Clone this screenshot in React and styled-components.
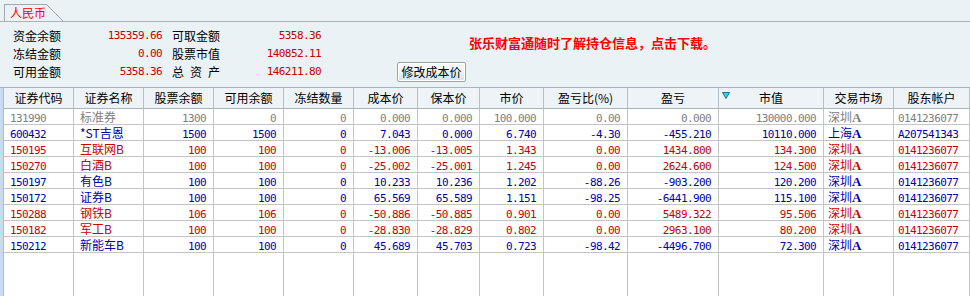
import React from 'react';
import styled, { createGlobalStyle } from 'styled-components';

const Global = createGlobalStyle`
  html, body { margin: 0; padding: 0; }
  body {
    background: #eaf2f6;
    font-family: "Noto Sans CJK SC", "Noto Sans", sans-serif;
    font-size: 12px;
    color: #000;
    overflow: hidden;
  }
  * { box-sizing: border-box; }
`;

const Page = styled.div`
  width: 970px;
  height: 296px;
  display: flex;
  flex-direction: column;
  background: #eaf2f6;
`;

const TabStrip = styled.div`
  height: 22px;
  padding: 4px 0 0 4px;
  border-bottom: 1px solid #a9b3bb;
  display: flex;
`;

const Tab = styled.div`
  display: flex;
  height: 17px;
`;

const TabLabel = styled.div`
  border-left: 1px solid #a0a9b1;
  border-top: 1px solid #a0a9b1;
  padding: 0 0 0 5px;
  width: 42px;
  color: #ff0000;
  font-size: 12px;
  line-height: 16px;
  white-space: nowrap;
`;

const TabSlant = styled.div`
  width: 17px;
  height: 17px;
  background: linear-gradient(
    to top right,
    transparent calc(50% - 0.7px),
    #a0a9b1 calc(50% - 0.7px),
    #a0a9b1 calc(50% + 0.7px),
    transparent calc(50% + 0.7px)
  );
`;

const Info = styled.div`
  height: 65px;
  padding-left: 13px;
  display: flex;
`;

const Funds = styled.div`
  margin-top: 5px;
  display: grid;
  grid-template-columns: 149px 149px;
  grid-auto-rows: 18px;
  column-gap: 10px;
`;

const FundItem = styled.div`
  display: flex;
  justify-content: space-between;
  align-items: center;
  line-height: 18px;
`;

const FundLabel = styled.span`
  color: #000;
  white-space: pre;
`;

const NumText = styled.span`
  font-family: "DejaVu Sans Mono", "Liberation Mono", monospace;
  font-size: 11px;
  letter-spacing: -0.6px;
  color: ${p => p.$color || '#000'};
`;

const Side = styled.div`
  margin-left: 76px;
  display: flex;
  flex-direction: column;
  align-items: flex-start;
`;

const Promo = styled.div`
  margin: 13px 0 0 72px;
  color: #ff0000;
  font-weight: bold;
  font-size: 13px;
  line-height: 16px;
  white-space: nowrap;
`;

const Button = styled.button`
  margin-top: 11px;
  height: 20px;
  width: 69px;
  padding: 0;
  font-family: "Noto Sans CJK SC", sans-serif;
  font-size: 12px;
  line-height: 16px;
  color: #000;
  border: 1px solid #a2a2a2;
  border-radius: 2px;
  background: linear-gradient(#fbfdfe 0%, #eef5f9 45%, #cfe3f1 100%);
  box-shadow: inset 0 0 0 1px #ffffff;
`;

const TableArea = styled.div`
  flex: 1;
  display: flex;
  border-top: 1px solid #aab3ba;
`;

const Strip = styled.div`
  width: 4px;
  background: #c9dbf2;
  border-right: 1px solid #a9bcd6;
`;

const Grid = styled.div`
  flex: 1;
  display: grid;
  grid-template-columns: 70px 70px 70px 70px 70px 64px 62px 64px 84px 91px 105px 70px 1fr;
  grid-template-rows: 21px repeat(9, 16px) 1fr;
  background: #fff;
`;

const HeadCell = styled.div`
  position: relative;
  background: #edf3f7;
  border-right: 1px solid #b6bec6;
  border-bottom: 1px solid #a9b3bb;
  text-align: center;
  line-height: 20px;
  white-space: nowrap;
  color: #000;
`;

const SortMark = styled.svg`
  position: absolute;
  left: 3px;
  top: 4px;
`;

const Cell = styled.div`
  border-right: 1px solid #c4c4c4;
  border-bottom: 1px solid #c4c4c4;
  text-align: ${p => p.$align || 'left'};
  padding: ${p => (p.$align === 'right' ? '0 7px 0 0' : `0 0 0 ${p.$pad ?? 6}px`)};
  line-height: 15px;
  white-space: nowrap;
  overflow: hidden;
  color: ${p => p.$color};
`;

const FillCell = styled.div`
  border-right: 1px solid #c4c4c4;
`;

const MarketA = styled.span`
  font-family: "Liberation Serif", "DejaVu Serif", serif;
  font-weight: bold;
  font-size: 13px;
`;

const RED = '#c80000';
const BLUE = '#0000b0';
const GRAY = '#808080';

const headers = ['证券代码', '证券名称', '股票余额', '可用余额', '冻结数量', '成本价', '保本价', '市价', '盈亏比(%)', '盈亏', '市值', '交易市场', '股东帐户'];

const rows = [
  [GRAY, '131990', '标准券', '1300', '0', '0', '0.000', '0.000', '100.000', '0.00', '0.000', '130000.000', '深圳', '0141236077'],
  [BLUE, '600432', '*ST吉恩', '1500', '1500', '0', '7.043', '0.000', '6.740', '-4.30', '-455.210', '10110.000', '上海', 'A207541343'],
  [RED, '150195', '互联网B', '100', '100', '0', '-13.006', '-13.005', '1.343', '0.00', '1434.800', '134.300', '深圳', '0141236077'],
  [RED, '150270', '白酒B', '100', '100', '0', '-25.002', '-25.001', '1.245', '0.00', '2624.600', '124.500', '深圳', '0141236077'],
  [BLUE, '150197', '有色B', '100', '100', '0', '10.233', '10.236', '1.202', '-88.26', '-903.200', '120.200', '深圳', '0141236077'],
  [BLUE, '150172', '证券B', '100', '100', '0', '65.569', '65.589', '1.151', '-98.25', '-6441.900', '115.100', '深圳', '0141236077'],
  [RED, '150288', '钢铁B', '106', '106', '0', '-50.886', '-50.885', '0.901', '0.00', '5489.322', '95.506', '深圳', '0141236077'],
  [RED, '150182', '军工B', '100', '100', '0', '-28.830', '-28.829', '0.802', '0.00', '2963.100', '80.200', '深圳', '0141236077'],
  [BLUE, '150212', '新能车B', '100', '100', '0', '45.689', '45.703', '0.723', '-98.42', '-4496.700', '72.300', '深圳', '0141236077'],
];

const funds = [
  ['资金余额', '135359.66'],
  ['可取金额', '5358.36'],
  ['冻结金额', '0.00'],
  ['股票市值', '140852.11'],
  ['可用金额', '5358.36'],
  ['总\u2002资\u2002产', '146211.80'],
];

export default function App() {
  return (
    <Page>
      <Global />
      <TabStrip>
        <Tab>
          <TabLabel>人民币</TabLabel>
          <TabSlant />
        </Tab>
      </TabStrip>
      <Info>
        <Funds>
          {funds.map(([label, value]) => (
            <FundItem key={label}>
              <FundLabel>{label}</FundLabel>
              <NumText $color={RED}>{value}</NumText>
            </FundItem>
          ))}
        </Funds>
        <Side>
          <Promo>张乐财富通随时了解持仓信息，点击下载。</Promo>
          <Button>修改成本价</Button>
        </Side>
      </Info>
      <TableArea>
        <Strip />
        <Grid>
          {headers.map((h, i) => (
            <HeadCell key={h}>
              {i === 10 && (
                <SortMark width="8" height="7" viewBox="0 0 8 7">
                  <path d="M0.5 0.5 H7.5 L4 6.5 Z" fill="#22d8f0" stroke="#2a6f86" strokeWidth="1" />
                </SortMark>
              )}
              {h}
            </HeadCell>
          ))}
          {rows.map(([color, code, name, ...rest]) => {
            const nums = rest.slice(0, 9);
            const [market, account] = rest.slice(9);
            return (
              <React.Fragment key={code}>
                <Cell $color={color}><NumText $color={color}>{code}</NumText></Cell>
                <Cell $color={color}>{name}</Cell>
                {nums.map((n, i) => (
                  <Cell key={i} $align="right" $color={color}>
                    <NumText $color={color}>{n}</NumText>
                  </Cell>
                ))}
                <Cell $color={color} $pad={4}>{market}<MarketA>A</MarketA></Cell>
                <Cell $color={color} $pad={4}><NumText $color={color}>{account}</NumText></Cell>
              </React.Fragment>
            );
          })}
          {headers.map(h => (
            <FillCell key={'f' + h} />
          ))}
        </Grid>
      </TableArea>
    </Page>
  );
}
